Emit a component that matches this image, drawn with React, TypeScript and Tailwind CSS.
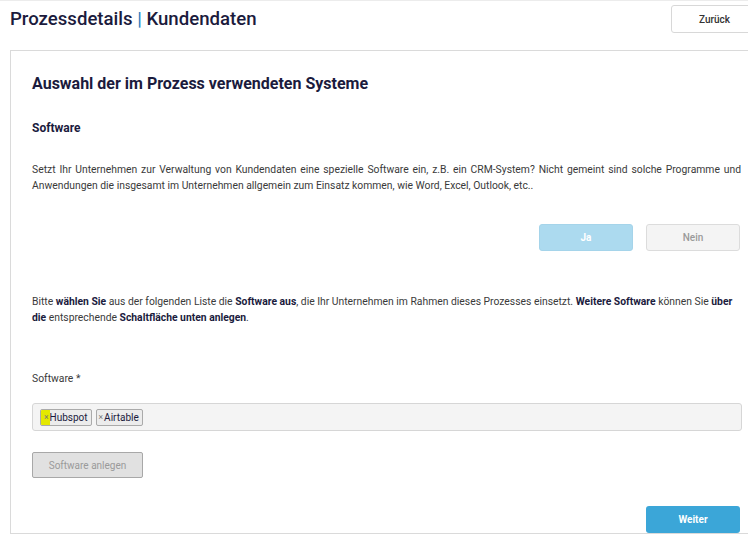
import React from "react";

export default function App() {
  return (
    <div
      className="w-[748px] h-[534px] overflow-hidden bg-white border-t border-[#ececec] text-[#3a3a3a]"
      style={{ fontFamily: "Roboto, 'Liberation Sans', sans-serif" }}
    >
      <div className="flex items-start h-[49px]">
        <h1 className="ml-[10px] mt-[6px] text-[18.6px] leading-[24px] font-medium text-[#1b1b3d] whitespace-nowrap">
          Prozessdetails <span className="text-[#2f7fc1]">|</span> Kundendaten
        </h1>
        <button className="ml-auto mt-[4px] -mr-[10px] w-[87px] h-[28px] border border-[#d8d8d8] rounded-[3px] bg-white text-[10px] font-medium text-[#333]">
          Zurück
        </button>
      </div>
      <div className="ml-[10px] w-[760px] border border-[#dadada] pl-[21px] pt-[23px]">
        <div className="w-[710px]">
          <h2 className="text-[16px] leading-[20px] font-bold text-[#1b1b3d]">
            Auswahl der im Prozess verwendeten Systeme
          </h2>
          <h3 className="mt-[26px] text-[12px] leading-[16px] font-bold text-[#1b1b3d]">
            Software
          </h3>
          <p className="mt-[26px] text-[10.35px] leading-[16px] text-justify pr-[1px]">
            Setzt Ihr Unternehmen zur Verwaltung von Kundendaten eine spezielle Software ein, z.B. ein CRM-System? Nicht gemeint sind solche Programme und Anwendungen die insgesamt im Unternehmen allgemein zum Einsatz kommen, wie Word, Excel, Outlook, etc..
          </p>
          <div className="mt-[30px] flex justify-end gap-[13px] pr-[2px]">
            <button className="w-[94px] h-[27px] rounded-[3px] bg-[#acdaef] border border-[#a5d4ea] text-white text-[10px] font-bold">
              Ja
            </button>
            <button className="w-[94px] h-[27px] rounded-[3px] bg-[#f4f4f4] border border-[#dcdcdc] text-[#9a9a9a] text-[10px] font-medium">
              Nein
            </button>
          </div>
          <p className="mt-[43px] text-[10.35px] leading-[16px]">
            Bitte <b className="font-bold text-[#1b1b3d]">wählen Sie</b> aus der folgenden Liste die{" "}
            <b className="font-bold text-[#1b1b3d]">Software aus</b>, die Ihr Unternehmen im Rahmen dieses Prozesses einsetzt.{" "}
            <b className="font-bold text-[#1b1b3d]">Weitere Software</b> können Sie{" "}
            <b className="font-bold text-[#1b1b3d]">über die</b> entsprechende{" "}
            <b className="font-bold text-[#1b1b3d]">Schaltfläche unten anlegen</b>.
          </p>
          <div className="mt-[45px] text-[10.35px] leading-[16px]">Software *</div>
          <div className="mt-[16px] h-[28px] border border-[#d6d6d6] rounded-[3px] bg-[#f4f4f4] flex items-center gap-[4px] pl-[7px]">
            <span className="h-[17px] flex items-center border border-[#aaaaaa] rounded-[2px] bg-[#ececec] text-[10px] text-[#1b1b3d] pr-[3px] overflow-hidden">
              <span className="h-full flex items-center bg-[#e4e800] pl-[3px] pr-[1px] text-[8.5px] text-[#777]">×</span>
              Hubspot
            </span>
            <span className="h-[17px] flex items-center border border-[#aaaaaa] rounded-[2px] bg-[#ececec] text-[10px] text-[#1b1b3d] pr-[3px] pl-[2px]">
              <span className="text-[8.5px] text-[#777] pr-[1px]">×</span>
              Airtable
            </span>
          </div>
          <button className="mt-[21px] w-[111px] h-[26px] rounded-[2px] bg-[#e1e1e1] border border-[#a8a8a8] text-[10px] text-[#9a9a9a]">
            Software anlegen
          </button>
          <div className="mt-[28px] flex justify-end pr-[2px]">
            <button className="w-[94px] h-[27px] rounded-[3px] bg-[#3ba6d8] text-white text-[10px] font-bold">
              Weiter
            </button>
          </div>
        </div>
      </div>
    </div>
  );
}
